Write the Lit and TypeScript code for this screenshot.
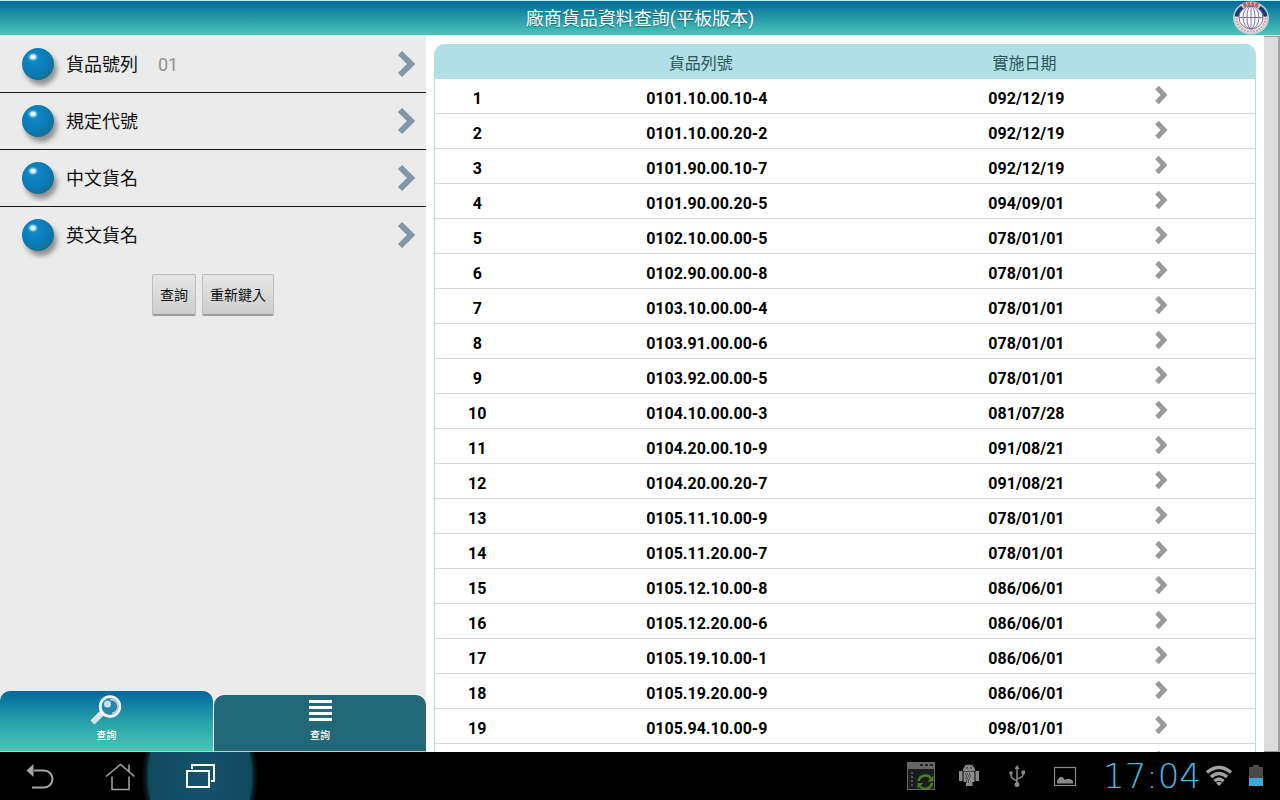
import { LitElement, html, css, svg } from "lit";
import { customElement, property, state } from "lit/decorators.js";
import { classMap } from "lit/directives/class-map.js";

interface Goods {
  code: string;
  date: string;
}

const GOODS: Goods[] = [
  { code: "0101.10.00.10-4", date: "092/12/19" },
  { code: "0101.10.00.20-2", date: "092/12/19" },
  { code: "0101.90.00.10-7", date: "092/12/19" },
  { code: "0101.90.00.20-5", date: "094/09/01" },
  { code: "0102.10.00.00-5", date: "078/01/01" },
  { code: "0102.90.00.00-8", date: "078/01/01" },
  { code: "0103.10.00.00-4", date: "078/01/01" },
  { code: "0103.91.00.00-6", date: "078/01/01" },
  { code: "0103.92.00.00-5", date: "078/01/01" },
  { code: "0104.10.00.00-3", date: "081/07/28" },
  { code: "0104.20.00.10-9", date: "091/08/21" },
  { code: "0104.20.00.20-7", date: "091/08/21" },
  { code: "0105.11.10.00-9", date: "078/01/01" },
  { code: "0105.11.20.00-7", date: "078/01/01" },
  { code: "0105.12.10.00-8", date: "086/06/01" },
  { code: "0105.12.20.00-6", date: "086/06/01" },
  { code: "0105.19.10.00-1", date: "086/06/01" },
  { code: "0105.19.20.00-9", date: "086/06/01" },
  { code: "0105.94.10.00-9", date: "098/01/01" },
];

const FIELDS = [
  { id: "code", label: "貨品號列", value: "01" },
  { id: "rule", label: "規定代號", value: "" },
  { id: "zh", label: "中文貨名", value: "" },
  { id: "en", label: "英文貨名", value: "" },
];

@customElement("app-header")
class AppHeader extends LitElement {
  static styles = css`
    :host {
      display: grid;
      grid-template-columns: 1fr auto 1fr;
      align-items: center;
      flex: none;
      height: 36px;
      box-sizing: border-box;
      border-top: 1px solid #b8f3f5;
      border-bottom: 1px solid #d9f6f4;
      background: linear-gradient(#036a97, #1b8ba3 35%, #4bc5b7);
    }
    .title {
      grid-column: 2;
      margin: 0;
      padding-top: 2px;
      font-size: 18px;
      font-weight: 400;
      line-height: 24px;
      color: #fff;
      text-shadow: 0 1px 1px rgba(0, 60, 80, 0.6);
    }
    .logo {
      justify-self: end;
      margin-right: 10px;
      display: block;
    }
  `;
  render() {
    return html`
      <h1 class="title">廠商貨品資料查詢(平板版本)</h1>
      <svg class="logo" width="38" height="34" viewBox="0 0 38 34">
        <ellipse cx="19" cy="17" rx="18" ry="16.5" fill="#b9d3d2" />
        <ellipse cx="19" cy="17" rx="16" ry="15" fill="#ecebea" />
        <ellipse cx="19" cy="17" rx="14.500" ry="13.500" fill="none" stroke="#cfa3a4" stroke-width="2" stroke-dasharray="2 1" />
        <ellipse cx="19" cy="16.500" rx="12" ry="11.500" fill="#fff" />
        <path d="M4.500 15.500A15 13.500 0 0 1 10.500 6.500" fill="none" stroke="#1d3a75" stroke-width="4" />
        <path d="M27.500 6.500A15 13.500 0 0 1 33.500 15.500" fill="none" stroke="#1d3a75" stroke-width="4" />
        <path d="M11.500 4.500Q19 1.500 26.500 4.500" fill="none" stroke="#cf5a58" stroke-width="4" stroke-dasharray="3 1" />
        <g fill="none" stroke="#7672a8" stroke-width="1">
          <ellipse cx="19" cy="16.500" rx="12" ry="11.500" />
          <ellipse cx="19" cy="16.500" rx="8" ry="11.500" />
          <ellipse cx="19" cy="16.500" rx="4" ry="11.500" />
          <path d="M19 5V28M7 16.500H31" />
        </g>
      </svg>
    `;
  }
}

@customElement("search-panel")
class SearchPanel extends LitElement {
  @state() private tab = 0;

  static styles = css`
    :host {
      display: flex;
      flex-direction: column;
      flex: 0 0 33.3%;
      min-width: 0;
      box-sizing: border-box;
      background: #ebebeb;
    }
    .form {
      flex: 1;
      min-height: 0;
      display: flex;
      flex-direction: column;
    }
    .row {
      display: flex;
      align-items: center;
      height: 56px;
      padding: 0 8px 0 16px;
      border-bottom: 1px solid #161616;
      font-size: 18px;
    }
    .row.last {
      border-bottom-color: transparent;
    }
    .ball {
      flex: none;
      margin-right: 2px;
    }
    .name {
      flex: none;
      padding-top: 2px;
      line-height: 24px;
      color: #111;
    }
    .field {
      flex: 1;
      min-width: 0;
      margin-left: 18px;
      padding: 2px 2px 0;
      border: 0;
      background: none;
      outline: none;
      font: 18px/24px Roboto, sans-serif;
      color: #8f8f8f;
    }
    .go {
      flex: none;
      padding: 0;
      border: 0;
      background: none;
      display: flex;
    }
    .actions {
      display: flex;
      justify-content: center;
      gap: 6px;
      padding-top: 10px;
    }
    .btn {
      height: 42px;
      padding: 0 7px 2px;
      border: 1px solid #bdbdbd;
      border-bottom: 2px solid #9c9c9c;
      border-radius: 2px;
      background: linear-gradient(#e6e6e6, #cdcdcd);
      font: inherit;
      font-size: 14px;
      color: #111;
    }
    .tabs {
      flex: none;
      display: flex;
      align-items: flex-end;
      gap: 1px;
      border-bottom: 1px solid #c9c9c9;
    }
    .tab {
      flex: 1;
      display: flex;
      flex-direction: column;
      align-items: center;
      justify-content: flex-end;
      gap: 4px;
      height: 56px;
      padding: 0 0 9px;
      border: 0;
      border-radius: 10px 10px 0 0;
      background: #226877;
      font: inherit;
      font-size: 10px;
      font-weight: 500;
      line-height: 12px;
      color: #fff;
    }
    .tab.on {
      height: 60px;
      background: linear-gradient(#01689c, #279fa9 50%, #4bc5b5);
    }
    .tab svg {
      display: block;
    }
  `;

  private pick(n: number) {
    this.tab = n;
  }

  render() {
    return html`
      <form class="form" @submit=${(e: Event) => e.preventDefault()}>
        ${FIELDS.map(
          (f, i) => html`
            <div class=${classMap({ row: true, last: i === FIELDS.length - 1 })}>
              <svg class="ball" width="48" height="48" viewBox="0 0 48 48">
                <defs>
                  <radialGradient id="b" cx="0.4" cy="0.36" r="0.68">
                    <stop offset="0" stop-color="#118acb" />
                    <stop offset="0.6" stop-color="#0a7cb8" />
                    <stop offset="1" stop-color="#1a6d8e" />
                  </radialGradient>
                  <radialGradient id="h">
                    <stop offset="0" stop-color="#fff" />
                    <stop offset="0.4" stop-color="#c9e8f8" />
                    <stop offset="1" stop-color="#1b93d3" stop-opacity="0" />
                  </radialGradient>
                  <filter id="s" x="-30%" y="-30%" width="170%" height="170%">
                    <feGaussianBlur stdDeviation="2.500" />
                  </filter>
                </defs>
                <circle cx="25" cy="29" r="16" fill="#555" opacity="0.6" filter="url(#s)" />
                <circle cx="22" cy="24" r="16" fill="url(#b)" />
                <ellipse cx="17" cy="17" rx="6" ry="5" fill="url(#h)" />
              </svg>
              <label class="name" for=${f.id}>${f.label}</label>
              <input class="field" id=${f.id} type="text" .value=${f.value} />
              <button class="go" type="button" aria-label=${f.label}>
                <svg width="22" height="28" viewBox="0 0 22 28">
                  <path d="M4 3L15 14L4 25" fill="none" stroke="#8197a8" stroke-width="6" />
                </svg>
              </button>
            </div>
          `
        )}
        <div class="actions">
          <button class="btn" type="submit">查詢</button>
          <button class="btn" type="reset">重新鍵入</button>
        </div>
      </form>
      <div class="tabs">
        <button class=${classMap({ tab: true, on: this.tab === 0 })} @click=${() => this.pick(0)}>
          <svg width="32" height="32" viewBox="0 0 32 32">
            <path d="M2.500 28.500L12 19" stroke="#dbe3e6" stroke-width="6" />
            <circle cx="20" cy="12.500" r="9.800" fill="#2b84a8" stroke="#f4fdff" stroke-width="2.800" />
            <path d="M20 5.500A7 7 0 0 1 22 19.500" fill="none" stroke="#a8cddb" stroke-width="2" />
            <circle cx="17.500" cy="10" r="3.500" fill="#bfe6f7" />
          </svg>
          <span>查詢</span>
        </button>
        <button class=${classMap({ tab: true, on: this.tab === 1 })} @click=${() => this.pick(1)}>
          <svg width="24" height="28" viewBox="0 0 24 28">
            <path d="M1 3.500H24M1 9.500H24M1 15.500H24M1 21.500H24" stroke="#fff" stroke-width="3" />
          </svg>
          <span>查詢</span>
        </button>
      </div>
    `;
  }
}

@customElement("goods-list")
class GoodsList extends LitElement {
  @property({ attribute: false }) items: Goods[] = [];

  static styles = css`
    :host {
      flex: 1;
      min-width: 0;
      display: flex;
      overflow: hidden;
      background: #fff;
    }
    .scroll {
      flex: 1;
      min-width: 0;
      padding: 8px;
    }
    .track {
      flex: none;
      width: 16px;
      box-sizing: border-box;
      border-top: 1px solid #999;
      border-right: 2px solid #a2a2a2;
      border-bottom: 1px solid #999;
      background: #dcdcdc;
    }
    .grid {
      width: 100%;
      table-layout: fixed;
      border-collapse: separate;
      border-spacing: 0;
      border: 1px solid #b9dde0;
      border-top: 0;
      border-radius: 10px 10px 0 0;
      overflow: hidden;
      font-size: 16px;
      line-height: 20px;
    }
    .head th {
      height: 35px;
      padding: 5px 10px 0 0;
      box-sizing: border-box;
      background: #b0e0e6;
      font-weight: 400;
      color: #2f5357;
    }
    .head .when {
      padding-right: 2px;
    }
    .n {
      width: 10%;
    }
    .c {
      width: 46%;
    }
    .d {
      width: 32%;
    }
    .line td {
      height: 35px;
      padding: 5px 0 0 2px;
      box-sizing: border-box;
      border-bottom: 1px solid #cfdada;
      font-weight: 700;
      text-align: center;
      color: #000;
    }
    .line .more {
      padding: 0 0 3px;
    }
    .link,
    .link svg {
      display: block;
      overflow: visible;
    }
  `;

  private arrow() {
    return html`<a class="link" href="#" aria-label="查詢">
      <svg width="16" height="20" viewBox="0 0 16 20">
        <path d="M0 2.500L7 10L0 17.500" fill="none" stroke="#9a9a9a" stroke-width="5" />
      </svg>
    </a>`;
  }

  render() {
    return html`
      <div class="scroll">
        <table class="grid">
          <colgroup>
            <col class="n" />
            <col class="c" />
            <col class="d" />
            <col />
          </colgroup>
          <thead>
            <tr class="head">
              <th></th>
              <th>貨品列號</th>
              <th class="when">實施日期</th>
              <th></th>
            </tr>
          </thead>
          <tbody>
            ${this.items.map(
              (g, i) => html`<tr class="line">
                <td>${i + 1}</td>
                <td>${g.code}</td>
                <td>${g.date}</td>
                <td class="more">${this.arrow()}</td>
              </tr>`
            )}
            <tr class="line">
              <td></td>
              <td></td>
              <td></td>
              <td class="more">${this.arrow()}</td>
            </tr>
          </tbody>
        </table>
      </div>
      <div class="track"></div>
    `;
  }
}

@customElement("system-bar")
class SystemBar extends LitElement {
  static styles = css`
    :host {
      flex: none;
      display: flex;
      align-items: center;
      justify-content: space-between;
      height: 48px;
      background: #000;
    }
    .keys,
    .status {
      display: flex;
      align-items: center;
      height: 48px;
    }
    .key {
      width: 80px;
      height: 48px;
      padding: 0;
      border: 0;
      background: none;
      display: flex;
      align-items: center;
      justify-content: center;
    }
    .key.recent {
      width: 116px;
      margin-left: -18px;
      background: radial-gradient(ellipse 58px 84px at center, #15536b 0%, #124a61 88%, #062028 93%, #000 100%);
    }
    .status {
      padding-right: 17px;
    }
    .status svg {
      display: block;
    }
    .tray {
      display: flex;
      align-items: center;
      gap: 20px;
      margin-right: 24px;
    }
    .clock {
      font-family: "DejaVu Sans", sans-serif;
      font-weight: 200;
      font-size: 34px;
      line-height: 48px;
      color: #4db4e0;
      margin-right: 4px;
    }
    .battery {
      margin-left: 16px;
    }
  `;

  render() {
    const dots = [0, 1, 2].map((i) => svg`<rect x=${13 + i * 5} y="2" width="3" height="2" fill="#222" />`);
    return html`
      <div class="keys">
        <button class="key" aria-label="返回">
          <svg width="32" height="32" viewBox="0 0 32 32">
            <path d="M10 10.500H20A8.500 8.500 0 0 1 20 27.500H8" fill="none" stroke="#a6a6a6" stroke-width="2" />
            <path d="M2.500 10.500L9.500 4V17Z" fill="#a6a6a6" />
          </svg>
        </button>
        <button class="key" aria-label="主畫面">
          <svg width="32" height="32" viewBox="0 0 32 32">
            <path d="M2 16.500L16.500 4.500L30.500 16.500M25 11.500V4.500M8 16.500V29.500H25V16.500" fill="none" stroke="#a6a6a6" stroke-width="1.500" />
          </svg>
        </button>
        <button class="key recent" aria-label="最近">
          <svg width="32" height="28" viewBox="0 0 32 28">
            <path d="M3 9H25V25H3Z" fill="none" stroke="#fff" stroke-width="2" />
            <path d="M8 7V3H30V19H27" fill="none" stroke="#fff" stroke-width="2" />
          </svg>
        </button>
      </div>
      <div class="status">
        <div class="tray">
          <svg width="28" height="28" viewBox="0 0 28 28">
            <rect x="0.500" y="0.500" width="27" height="27" fill="#1a1c20" stroke="#666" />
            <rect x="0" y="0" width="28" height="7" fill="#666" />
            ${dots}
            <path d="M4 11H6M4 15H6M4 19H6M4 23H6" stroke="#555" stroke-width="2" />
            <path d="M11.500 19A7 7 0 0 1 24 16.500M25 21A7 7 0 0 1 13 24.500" fill="none" stroke="#4f7d25" stroke-width="2.500" />
            <path d="M26.500 14V19.500H20.500ZM10.500 26.500V21H16.500Z" fill="#4f7d25" />
          </svg>
          <svg width="28" height="28" viewBox="0 0 28 28">
            <path d="M8.500 8.500A5.500 5.500 0 0 1 19.500 8.500ZM10 2.500L12 5M18 2.500L16 5" fill="#8a8a8a" stroke="#8a8a8a" />
            <rect x="4" y="9" width="3.500" height="10" fill="#8a8a8a" />
            <rect x="20.500" y="9" width="3.500" height="10" fill="#8a8a8a" />
            <path d="M8.500 9.500H19.500V20H17.500V24H11V20H8.500Z" fill="#8a8a8a" />
            <path d="M10 12H16M11 14H16M10 16H15M11 18H14M11 20H14" stroke="#111" stroke-dasharray="1 1" />
            <circle cx="12" cy="6" r="0.800" fill="#000" />
            <circle cx="16" cy="6" r="0.800" fill="#000" />
          </svg>
          <svg width="28" height="28" viewBox="0 0 28 28">
            <path d="M14 5V22M8 11V14Q8 16 14 19M20 10V13Q20 15 14 17" fill="none" stroke="#8a8a8a" stroke-width="1.500" />
            <path d="M14 3L16.500 7H11.500Z" fill="#8a8a8a" />
            <circle cx="8" cy="11" r="1.800" fill="#8a8a8a" />
            <rect x="18.500" y="8.500" width="3.500" height="3.500" fill="#8a8a8a" />
            <circle cx="14" cy="22.500" r="2.500" fill="#8a8a8a" />
          </svg>
          <svg width="28" height="28" viewBox="0 0 28 28">
            <rect x="3.500" y="5.500" width="21" height="18" fill="none" stroke="#8a8a8a" stroke-width="1.200" />
            <path d="M6 21.500V19Q10 11 14 18Q18 15 22 19V21.500Z" fill="#8a8a8a" />
          </svg>
        </div>
        <time class="clock">17:04</time>
        <svg width="28" height="28" viewBox="0 0 28 28">
          <g fill="none" stroke="#a2a2a2" stroke-width="3.400">
            <path d="M2 10.500Q14 0.500 26 10.500" />
            <path d="M6 15Q14 8 22 15" />
            <path d="M9.500 19Q14 15 18.500 19" />
          </g>
          <path d="M11 21Q14 18.500 17 21L14 24Z" fill="#a2a2a2" />
        </svg>
        <svg class="battery" width="14" height="22" viewBox="0 0 14 22">
          <path d="M4 0H10V2H14V13H0V2H4Z" fill="#4a4a4a" />
          <rect x="0" y="13" width="14" height="8" fill="#3fa6d8" />
        </svg>
      </div>
    `;
  }
}

@customElement("app-root")
class AppRoot extends LitElement {
  static styles = css`
    :host {
      display: flex;
      flex-direction: column;
      height: 100vh;
      overflow: hidden;
      font-family: Roboto, "Noto Sans CJK TC", sans-serif;
    }
    .main {
      flex: 1;
      min-height: 0;
      display: flex;
    }
  `;
  render() {
    return html`
      <app-header></app-header>
      <main class="main">
        <search-panel></search-panel>
        <goods-list .items=${GOODS}></goods-list>
      </main>
      <system-bar></system-bar>
    `;
  }
}
